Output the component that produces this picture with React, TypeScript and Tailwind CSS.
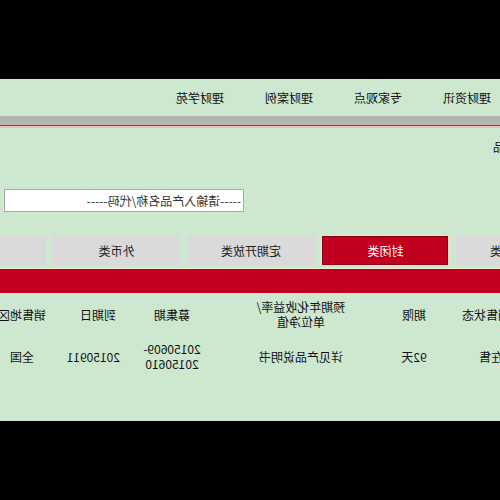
import React from "react"

const navItems = ["理财资讯", "专家观点", "理财案例", "理财学苑"]

const tabs = [
  { label: "现金管理类", active: false },
  { label: "封闭类", active: true },
  { label: "定期开放类", active: false },
  { label: "外币类", active: false },
  { label: "结构类", active: false },
]

const columns = [
  { key: "status", width: "w-[72px]", cellPad: "pr-[10px]", head: <>销售状态</>, cell: <>在售</> },
  { key: "term", width: "w-[72px]", cellPad: "", head: <>期限</>, cell: <>92天</> },
  {
    key: "yield",
    width: "w-[154px]",
    cellPad: "",
    head: (
      <>
        预期年化收益率/
        <br />
        单位净值
      </>
    ),
    cell: <>详见产品说明书</>,
  },
  {
    key: "raise",
    width: "w-[104px]",
    cellPad: "",
    head: <>募集期</>,
    cell: (
      <>
        20150609-
        <br />
        20150610
      </>
    ),
  },
  { key: "due", width: "w-[44px]", cellPad: "", head: <>到期日</>, cell: <>20150911</> },
  { key: "area", width: "w-[108px]", cellPad: "", head: <>销售地区</>, cell: <>全国</> },
]

export default function App() {
  return (
    <div className="w-[500px] h-[500px] overflow-hidden bg-black">
      {/* the whole capture is mirrored left to right */}
      <div
        className="w-[500px] h-[500px] -scale-x-100 flex flex-col text-[12px] leading-[14px] text-[#111]"
        style={{ fontFamily: '"Noto Sans CJK SC", "Noto Sans", sans-serif' }}
      >
        <div className="h-[79px] shrink-0 bg-black" />

        <div className="h-[342px] shrink-0 bg-[#cde8cf] flex flex-col overflow-hidden">
          {/* nav */}
          <div className="h-[37px] shrink-0 flex items-center pl-[9px] gap-[41px] whitespace-nowrap">
            {navItems.map((n) => (
              <span key={n}>{n}</span>
            ))}
          </div>
          <div className="h-[9px] shrink-0 bg-[#b3b3b3]" />
          <div className="h-[1px] shrink-0 bg-[#a8343a]" />
          <div className="h-[2px] shrink-0 bg-[#f2b9b4]" />

          {/* heading */}
          <div className="mt-[7px] h-[24px] shrink-0 flex items-center ml-[-41px] whitespace-nowrap">
            理财产品
          </div>

          {/* search */}
          <div className="mt-[30px] ml-[256px] w-[240px] h-[23px] shrink-0 bg-white border border-[#a9a9a9] flex items-center pl-[2px] text-[#333] whitespace-nowrap">
            -----请输入产品名称/代码-----
          </div>

          {/* tabs */}
          <div className="mt-[23px] h-[31px] shrink-0 flex gap-[6.5px] ml-[-84px]">
            {tabs.map((t) =>
              t.active ? (
                <div
                  key={t.label}
                  className="w-[128px] shrink-0 bg-[#c1001f] border-[1.5px] border-[#f4dcc8] shadow-[inset_0_0_0_1px_#8f0018] flex items-center justify-center text-white whitespace-nowrap"
                >
                  {t.label}
                </div>
              ) : (
                <div
                  key={t.label}
                  className="w-[128px] shrink-0 bg-[#dadada] flex items-center justify-center text-[#222] whitespace-nowrap"
                >
                  {t.label}
                </div>
              )
            )}
          </div>

          <div className="mt-[2px] h-[1px] shrink-0 bg-[#f6ead6]" />
          <div className="h-[1px] shrink-0 bg-[#7a1a1a]" />
          <div className="h-[23px] shrink-0 bg-[#c1001f]" />
          <div className="h-[1px] shrink-0 bg-[#f2d6cf]" />

          {/* table */}
          <div className="flex ml-[-22px] mt-[2px] h-[36px] shrink-0 items-center">
            {columns.map((c) => (
              <div key={c.key} className={`${c.width} shrink-0 text-center whitespace-nowrap leading-[15px]`}>
                {c.head}
              </div>
            ))}
          </div>
          <div className="flex ml-[-22px] h-[48px] shrink-0 items-center">
            {columns.map((c) => (
              <div key={c.key} className={`${c.width} ${c.cellPad} shrink-0 text-center whitespace-nowrap leading-[15px]`}>
                {c.cell}
              </div>
            ))}
          </div>
        </div>

        <div className="flex-1 bg-black" />
      </div>
    </div>
  )
}
